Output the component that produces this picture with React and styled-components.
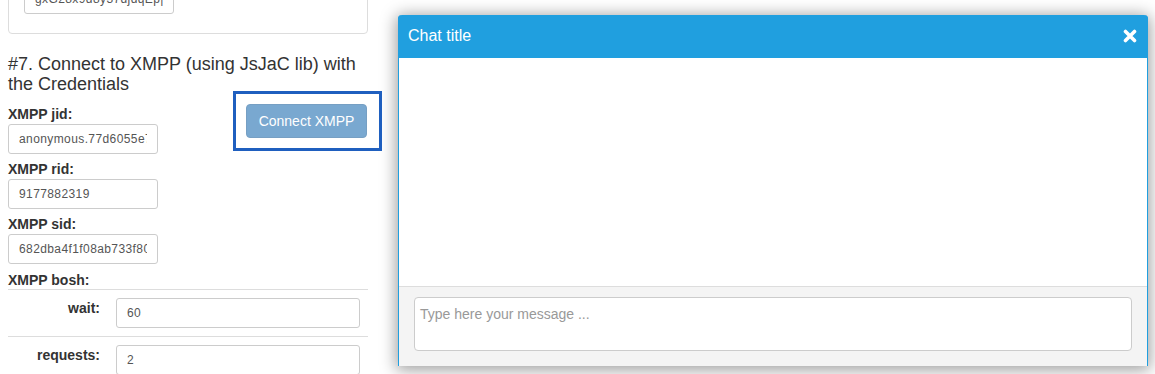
import React from "react";
import styled, { createGlobalStyle } from "styled-components";

const GlobalStyle = createGlobalStyle`
    html, body {
        margin: 0;
        padding: 0;
        background: #fff;
    }
    body {
        font-family: "Liberation Sans", Arial, sans-serif;
        font-size: 14px;
        line-height: 1.42857;
        color: #333;
    }
    * {
        box-sizing: border-box;
    }
`

// page
const Page = styled.div`
    display: flex;
    align-items: flex-start;
    height: 374px;
    overflow: hidden;
`
const LeftCol = styled.div`
    width: 360px;
    margin-left: 8px;
    flex-shrink: 0;
`
const Well = styled.div`
    margin-top: -36px;
    padding: 19px 15px;
    border: 1px solid #ddd;
    border-radius: 4px;
    background: #fff;
`
const Heading = styled.h4`
    font-size: 18px;
    font-weight: 500;
    line-height: 20px;
    margin: 20px 0 10px;
    color: #333;
`
const FormRow = styled.div`
    display: flex;
    justify-content: space-between;
    align-items: flex-start;
`
const Fields = styled.div`
    width: 150px;
`
const Group = styled.div`
    margin-bottom: 5px;
`
const Label = styled.label`
    display: block;
    font-weight: bold;
    height: 20px;
    line-height: 20px;
`
const Input = styled.input`
    display: block;
    width: ${p => p.$width || "150px"};
    height: 30px;
    padding: 5px 10px;
    font-family: inherit;
    font-size: 12px;
    letter-spacing: 0.4px;
    color: #555;
    background: #fff;
    border: 1px solid #ccc;
    border-radius: 3px;
    outline: none;
`
const ButtonWrap = styled.div`
    position: relative;
    margin-right: 1px;
`
const Highlight = styled.div`
    position: absolute;
    top: -13px;
    bottom: -13px;
    left: -13px;
    right: -15px;
    border: 3px solid #1f5fbf;
    pointer-events: none;
`
const Button = styled.button`
    display: block;
    width: 121px;
    height: 34px;
    padding: 0;
    white-space: nowrap;
    font-family: inherit;
    font-size: 14px;
    color: #fff;
    background: #337ab7;
    border: 1px solid #2e6da4;
    border-radius: 4px;
    opacity: 0.65;
`
const BoshTitle = styled(Label)`
    margin-top: 1px;
    margin-bottom: -1px;
`
const BoshTable = styled.table`
    width: 360px;
    border-collapse: collapse;
`
const BoshRow = styled.tr`
    border-top: 1px solid #ddd;
`
const BoshKey = styled.th`
    width: 100px;
    padding: 8px;
    text-align: right;
    vertical-align: top;
    font-weight: bold;
    line-height: 20px;
`
const BoshValue = styled.td`
    padding: 8px;
`

// chat
const Chat = styled.div`
    width: 750px;
    height: 351px;
    margin-left: 30px;
    margin-top: 15px;
    flex-shrink: 0;
    display: flex;
    flex-direction: column;
    border-left: 1px solid #209fdf;
    border-right: 1px solid #209fdf;
    border-radius: 4px 4px 0 0;
    box-shadow: 0 2px 16px 2px rgba(0, 0, 0, 0.38);
    background: #fff;
`
const ChatHeader = styled.div`
    height: 43px;
    display: flex;
    align-items: center;
    justify-content: space-between;
    padding: 0 11px 0 10px;
    background: #209fdf;
    color: #fff;
    font-size: 16px;
    border-radius: 4px 4px 0 0;
    margin: 0 -1px;
`
const CloseIcon = styled.svg`
    width: 14px;
    height: 14px;
    margin-top: -2px;
`
const ChatBody = styled.div`
    flex: 1;
    background: #fff;
`
const ChatFooter = styled.div`
    border-top: 1px solid #ddd;
    background: #f4f4f4;
    padding: 10px 15px 15px;
`
const TextArea = styled.textarea`
    display: block;
    width: 100%;
    height: 54px;
    padding: 6px 5px;
    font-family: inherit;
    font-size: 14px;
    line-height: 20px;
    color: #555;
    border: 1px solid #ccc;
    border-radius: 4px;
    resize: none;
    outline: none;
    &::placeholder {
        color: #999;
    }
`

const fields = [
    { label: "XMPP jid:", value: "anonymous.77d6055e7f" },
    { label: "XMPP rid:", value: "9177882319" },
    { label: "XMPP sid:", value: "682dba4f1f08ab733f800c" },
]

const bosh = [
    { key: "wait:", value: "60" },
    { key: "requests:", value: "2" },
]

export default function App() {
    return (
        <>
            <GlobalStyle />
            <Page>
                <LeftCol>
                    <Well>
                        <Input readOnly value="gxG28x9d8y37djdqEp|" />
                    </Well>
                    <Heading>#7. Connect to XMPP (using JsJaC lib) with the Credentials</Heading>
                    <FormRow>
                        <Fields>
                            {fields.map(f => (
                                <Group key={f.label}>
                                    <Label>{f.label}</Label>
                                    <Input readOnly value={f.value} />
                                </Group>
                            ))}
                        </Fields>
                        <ButtonWrap>
                            <Button disabled>Connect XMPP</Button>
                            <Highlight />
                        </ButtonWrap>
                    </FormRow>
                    <BoshTitle>XMPP bosh:</BoshTitle>
                    <BoshTable>
                        <tbody>
                            {bosh.map(b => (
                                <BoshRow key={b.key}>
                                    <BoshKey>{b.key}</BoshKey>
                                    <BoshValue>
                                        <Input readOnly value={b.value} $width="244px" />
                                    </BoshValue>
                                </BoshRow>
                            ))}
                        </tbody>
                    </BoshTable>
                </LeftCol>
                <Chat>
                    <ChatHeader>
                        <span>Chat title</span>
                        <CloseIcon viewBox="0 0 14 14">
                            <path d="M2.5 2.5 L11.5 11.5 M11.5 2.5 L2.5 11.5" stroke="#fff" strokeWidth="3.6" strokeLinecap="round" fill="none" />
                        </CloseIcon>
                    </ChatHeader>
                    <ChatBody />
                    <ChatFooter>
                        <TextArea placeholder="Type here your message ..." />
                    </ChatFooter>
                </Chat>
            </Page>
        </>
    );
}
